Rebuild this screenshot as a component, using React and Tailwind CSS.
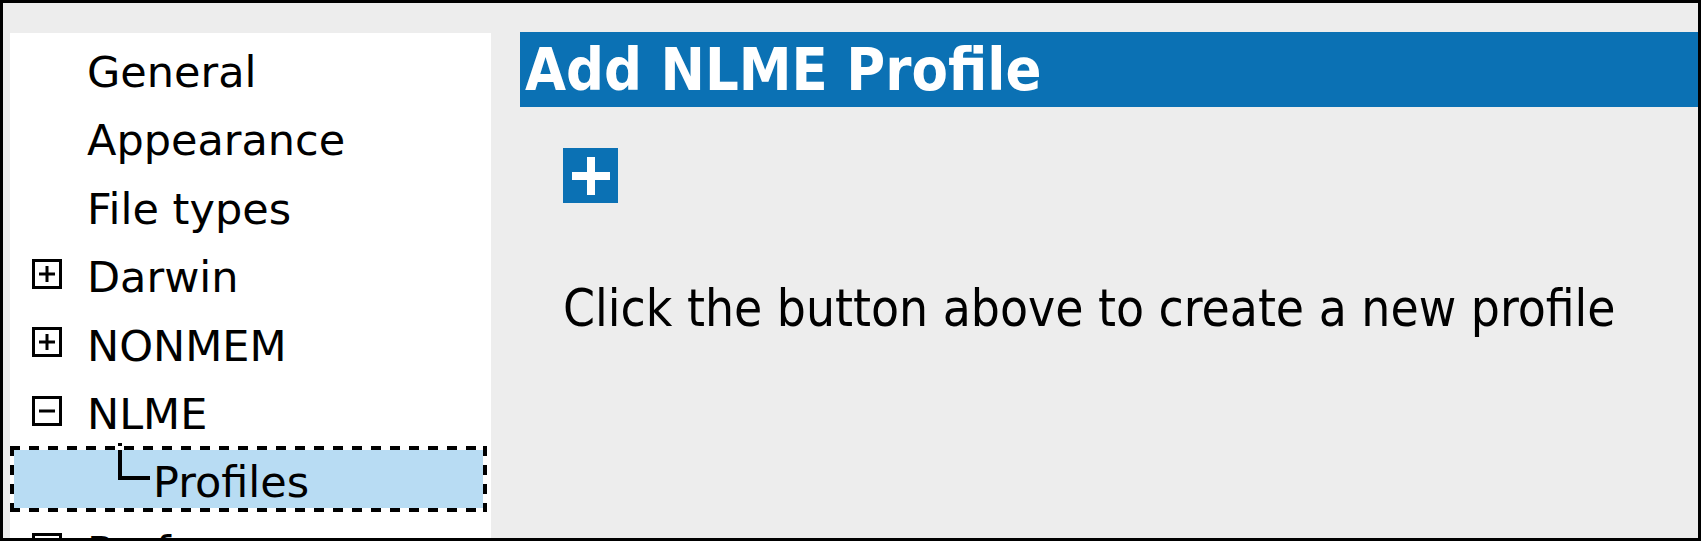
import React from 'react';

const treeItems = [
  { label: 'General', toggle: null },
  { label: 'Appearance', toggle: null },
  { label: 'File types', toggle: null },
  { label: 'Darwin', toggle: 'plus' },
  { label: 'NONMEM', toggle: 'plus' },
  { label: 'NLME', toggle: 'minus' },
  { label: 'Profiles', child: true, selected: true },
  { label: 'Performance', toggle: 'plus', last: true },
];

const ToggleBox = ({ type }) => (
  <svg width="30" height="30" viewBox="0 0 30 30" className="mb-[8px] flex-none">
    <rect x="1.5" y="1.5" width="27" height="27" fill="white" stroke="black" strokeWidth="3" />
    <line x1="7" y1="15" x2="23" y2="15" stroke="black" strokeWidth="3" />
    {type === 'plus' && <line x1="15" y1="7" x2="15" y2="23" stroke="black" strokeWidth="3" />}
  </svg>
);

// dotted focus rectangle drawn round the selected node
const FocusRing = () => {
  const edges = [
    [0, 2, 477, 2],
    [0, 64, 477, 64],
    [2, 0, 2, 66],
    [475, 0, 475, 66],
  ];
  return (
    <svg width="477" height="66" className="absolute inset-0 pointer-events-none">
      {edges.map(([x1, y1, x2, y2], i) => (
        <g key={i} strokeWidth="4">
          <line x1={x1} y1={y1} x2={x2} y2={y2} stroke="white" />
          <line x1={x1} y1={y1} x2={x2} y2={y2} stroke="black" strokeDasharray="10 9" />
        </g>
      ))}
    </svg>
  );
};

const TreeRow = ({ item }) => {
  if (item.child) {
    return (
      <div className="h-[68.5px]">
        <div className="relative mt-[-3px] h-[66px] w-[477px] bg-[#b8dcf3] flex items-center">
          <div className="ml-[108px] self-start mt-[-3px] h-[37px] w-[32px] border-l-[4px] border-b-[4px] border-black flex-none" />
          <span className="ml-[3px] pt-[7px]">{item.label}</span>
          <FocusRing />
        </div>
      </div>
    );
  }
  return (
    <div className={`h-[68.5px] flex items-center pl-[22px] ${item.last ? 'pt-[7px]' : ''}`}>
      {item.toggle ? <ToggleBox type={item.toggle} /> : <div className="w-[30px] flex-none" />}
      <span className="ml-[25px] whitespace-nowrap">{item.label}</span>
    </div>
  );
};

const App = () => {
  return (
    <div className="w-[1701px] h-[541px] border-[3px] border-black bg-[#ededed] overflow-hidden flex items-start">
      <div className="ml-[7px] mt-[30px] w-[481px] flex-none bg-white pt-[5px] text-[43px] leading-none text-black font-['DejaVu_Sans',sans-serif]">
        {treeItems.map((item) => (
          <TreeRow key={item.label} item={item} />
        ))}
      </div>

      <div className="ml-[29px] mt-[29px] flex-1">
        <div className="h-[75px] bg-[#0b71b4] flex items-center pl-[5px]">
          <h1 className="text-white font-bold text-[59px] leading-none font-stretch-condensed font-['DejaVu_Sans_Condensed','DejaVu_Sans',sans-serif]">
            Add NLME Profile
          </h1>
        </div>
        <div className="pl-[43px]">
          <button className="mt-[41px] w-[55px] h-[55px] bg-[#0b71b4] flex items-center justify-center">
            <svg width="40" height="40" viewBox="0 0 40 40">
              <rect x="1" y="16" width="38" height="8" fill="white" />
              <rect x="16" y="1" width="8" height="38" fill="white" />
            </svg>
          </button>
          <p className="mt-[80px] text-[51px] leading-none text-black whitespace-nowrap font-stretch-condensed font-['DejaVu_Sans_Condensed','DejaVu_Sans',sans-serif]">
            Click the button above to create a new profile
          </p>
        </div>
      </div>
    </div>
  );
};

export default App;
